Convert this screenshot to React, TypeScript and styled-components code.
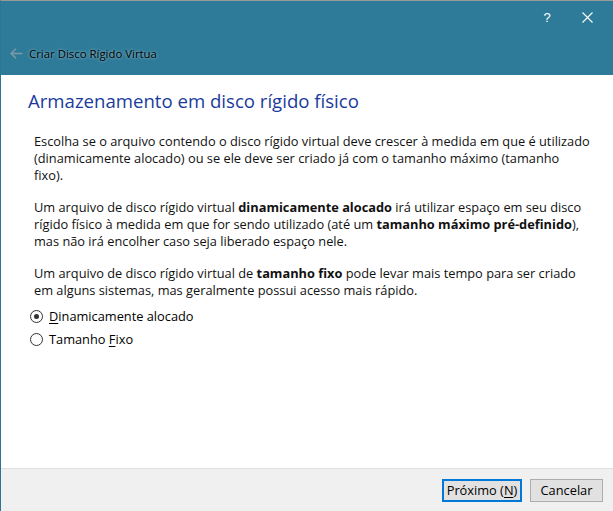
import React from "react";
import styled, { createGlobalStyle } from "styled-components";

const Global = createGlobalStyle`
  html, body { margin: 0; padding: 0; }
  body { width: 613px; height: 511px; overflow: hidden; background: #fff; }
  #root { width: 613px; height: 511px; }
`;

const Window = styled.div`
  width: 613px;
  height: 511px;
  box-sizing: border-box;
  display: flex;
  flex-direction: column;
  border-top: 1px solid #9a9a9a;
  border-left: 1px solid #2b7693;
  font-family: "Open Sans", "Noto Sans", sans-serif;
  color: #000;
`;

const TitleBar = styled.div`
  height: 74px;
  background: #2e7b99;
  display: flex;
  flex-direction: column;
`;

const Controls = styled.div`
  height: 32px;
  display: flex;
  justify-content: flex-end;
  align-items: center;
  padding-right: 6px;
`;

const CtrlButton = styled.div`
  width: 40px;
  height: 32px;
  display: flex;
  align-items: center;
  justify-content: center;
  color: #fff;
  font-family: "Liberation Sans", sans-serif;
  font-size: 13px;
`;

const NavRow = styled.div`
  display: flex;
  align-items: center;
  gap: 6px;
  padding: 13px 0 0 9px;
`;

const NavTitle = styled.span`
  font-size: 11.4px;
  color: #000;
  text-shadow: 0 0 3px rgba(255, 255, 255, 0.6);
`;

const Content = styled.div`
  flex: 1;
  padding: 13px 0 0 27px;
  display: flex;
  flex-direction: column;
`;

const Heading = styled.h1`
  margin: 0;
  font-weight: 400;
  font-size: 18.6px;
  color: #1a3b9c;
  line-height: 25px;
`;

const Body = styled.div`
  padding: 20px 0 0 6px;
  display: flex;
  flex-direction: column;
  gap: 15px;
`;

const Para = styled.p`
  margin: 0;
  font-size: 12.8px;
  line-height: 17px;
  color: #111;
  white-space: nowrap;
  b { font-weight: 700; }
`;

const Options = styled.div`
  display: flex;
  flex-direction: column;
  gap: 7px;
  padding: 9px 0 0 2px;
`;

const Option = styled.label`
  display: flex;
  align-items: center;
  gap: 6px;
  font-size: 12.8px;
  line-height: 16px;
  u { text-decoration: underline; text-underline-offset: 2px; }
`;

const Radio = styled.span<{ $checked?: boolean }>`
  width: 11px;
  height: 11px;
  border: 1px solid #333;
  border-radius: 50%;
  background: #fff;
  display: flex;
  align-items: center;
  justify-content: center;
  &::after {
    content: "";
    width: 5px;
    height: 5px;
    border-radius: 50%;
    background: #333;
    display: ${(p) => (p.$checked ? "block" : "none")};
  }
`;

const Footer = styled.div`
  height: 42px;
  background: #f0f0f0;
  border-top: 1px solid #dfdfdf;
  display: flex;
  justify-content: flex-end;
  align-items: center;
  gap: 8px;
  padding-right: 10px;
`;

const Button = styled.button<{ $default?: boolean; $w: number }>`
  height: 23px;
  width: ${(p) => p.$w}px;
  box-sizing: border-box;
  padding: 0;
  background: #e1e1e1;
  border: ${(p) => (p.$default ? "2px solid #0078d7" : "1px solid #adadad")};
  font-family: "Open Sans", "Noto Sans", sans-serif;
  font-size: 12.8px;
  color: #000;
  u { text-decoration: underline; text-underline-offset: 2px; }
`;

export default function App() {
  return (
    <>
      <Global />
      <Window>
        <TitleBar>
          <Controls>
            <CtrlButton>?</CtrlButton>
            <CtrlButton>
              <svg width="11" height="11" viewBox="0 0 11 11">
                <path d="M0.5 0.5 L10.5 10.5 M10.5 0.5 L0.5 10.5" stroke="#fff" strokeWidth="1.1" />
              </svg>
            </CtrlButton>
          </Controls>
          <NavRow>
            <svg width="13" height="11" viewBox="0 0 13 11">
              <path d="M6 0.8 L1.2 5.5 L6 10.2 M1.2 5.5 L12.5 5.5" stroke="#7d98a6" strokeWidth="1.6" fill="none" />
            </svg>
            <NavTitle>Criar Disco Rígido Virtua</NavTitle>
          </NavRow>
        </TitleBar>
        <Content>
          <Heading>Armazenamento em disco rígido físico</Heading>
          <Body>
            <Para>
              Escolha se o arquivo contendo o disco rígido virtual deve crescer à medida em que é utilizado
              <br />
              (dinamicamente alocado) ou se ele deve ser criado já com o tamanho máximo (tamanho
              <br />
              fixo).
            </Para>
            <Para>
              Um arquivo de disco rígido virtual <b>dinamicamente alocado</b> irá utilizar espaço em seu disco
              <br />
              rígido físico à medida em que for sendo utilizado (até um <b>tamanho máximo pré-definido</b>),
              <br />
              mas não irá encolher caso seja liberado espaço nele.
            </Para>
            <Para>
              Um arquivo de disco rígido virtual de <b>tamanho fixo</b> pode levar mais tempo para ser criado
              <br />
              em alguns sistemas, mas geralmente possui acesso mais rápido.
            </Para>
          </Body>
          <Options>
            <Option>
              <Radio $checked />
              <span><u>D</u>inamicamente alocado</span>
            </Option>
            <Option>
              <Radio />
              <span>Tamanho <u>F</u>ixo</span>
            </Option>
          </Options>
        </Content>
        <Footer>
          <Button $default $w={80}>Próximo (<u>N</u>)</Button>
          <Button $w={73}>Cancelar</Button>
        </Footer>
      </Window>
    </>
  );
}
